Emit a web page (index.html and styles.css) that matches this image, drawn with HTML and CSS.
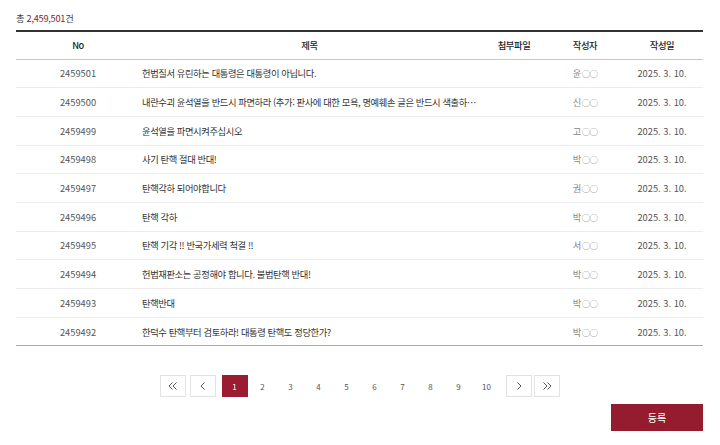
FILE: index.html
```html
<!DOCTYPE html>
<html lang="ko">
<head>
<meta charset="utf-8">
<link rel="stylesheet" href="styles.css">
</head>
<body>
<div class="page">
  <p class="total">총 <span class="count">2,459,501</span>건</p>
  <table class="board">
    <colgroup>
      <col class="c-no"><col class="c-title"><col class="c-file"><col class="c-author"><col class="c-date">
    </colgroup>
    <thead>
      <tr><th>No</th><th>제목</th><th>첨부파일</th><th>작성자</th><th>작성일</th></tr>
    </thead>
    <tbody>
      <tr><td class="no">2459501</td><td class="title">헌법질서 유린하는 대통령은 대통령이 아닙니다.</td><td></td><td class="author">윤<span class="mask">○○</span></td><td class="date">2025. 3. 10.</td></tr>
      <tr><td class="no">2459500</td><td class="title">내란수괴 윤석열을 반드시 파면하라 (추가: 판사에 대한 모욕, 명예훼손 글은 반드시 색출하…</td><td></td><td class="author">신<span class="mask">○○</span></td><td class="date">2025. 3. 10.</td></tr>
      <tr><td class="no">2459499</td><td class="title">윤석열을 파면시켜주십시오</td><td></td><td class="author">고<span class="mask">○○</span></td><td class="date">2025. 3. 10.</td></tr>
      <tr><td class="no">2459498</td><td class="title">사기 탄핵 절대 반대!</td><td></td><td class="author">박<span class="mask">○○</span></td><td class="date">2025. 3. 10.</td></tr>
      <tr><td class="no">2459497</td><td class="title">탄핵각하 되어야합니다</td><td></td><td class="author">권<span class="mask">○○</span></td><td class="date">2025. 3. 10.</td></tr>
      <tr><td class="no">2459496</td><td class="title">탄핵 각하</td><td></td><td class="author">박<span class="mask">○○</span></td><td class="date">2025. 3. 10.</td></tr>
      <tr><td class="no">2459495</td><td class="title">탄핵 기각 !! 반국가세력 척결 !!</td><td></td><td class="author">서<span class="mask">○○</span></td><td class="date">2025. 3. 10.</td></tr>
      <tr><td class="no">2459494</td><td class="title">헌법재판소는 공정해야 합니다. 불법탄핵 반대!</td><td></td><td class="author">박<span class="mask">○○</span></td><td class="date">2025. 3. 10.</td></tr>
      <tr><td class="no">2459493</td><td class="title">탄핵반대</td><td></td><td class="author">박<span class="mask">○○</span></td><td class="date">2025. 3. 10.</td></tr>
      <tr><td class="no">2459492</td><td class="title">한덕수 탄핵부터 검토하라! 대통령 탄핵도 정당한가?</td><td></td><td class="author">박<span class="mask">○○</span></td><td class="date">2025. 3. 10.</td></tr>
    </tbody>
  </table>
  <nav class="pager">
    <a class="nav first" href="#" aria-label="처음"><svg width="10" height="8" viewBox="0 0 10 8"><path d="M4.5 0.5 L1 4 L4.5 7.5 M8.5 0.5 L5 4 L8.5 7.5" fill="none" stroke="#555" stroke-width="1"/></svg></a>
    <a class="nav prev" href="#" aria-label="이전"><svg width="6" height="8" viewBox="0 0 6 8"><path d="M4.5 0.5 L1 4 L4.5 7.5" fill="none" stroke="#555" stroke-width="1"/></svg></a>
    <a class="num active" href="#">1</a>
    <a class="num" href="#">2</a>
    <a class="num" href="#">3</a>
    <a class="num" href="#">4</a>
    <a class="num" href="#">5</a>
    <a class="num" href="#">6</a>
    <a class="num" href="#">7</a>
    <a class="num" href="#">8</a>
    <a class="num" href="#">9</a>
    <a class="num" href="#">10</a>
    <a class="nav next" href="#" aria-label="다음"><svg width="6" height="8" viewBox="0 0 6 8"><path d="M1.5 0.5 L5 4 L1.5 7.5" fill="none" stroke="#555" stroke-width="1"/></svg></a>
    <a class="nav last" href="#" aria-label="마지막"><svg width="10" height="8" viewBox="0 0 10 8"><path d="M1.5 0.5 L5 4 L1.5 7.5 M5.5 0.5 L9 4 L5.5 7.5" fill="none" stroke="#555" stroke-width="1"/></svg></a>
  </nav>
  <div class="actions">
    <button class="btn-write" type="button">등록</button>
  </div>
</div>
</body>
</html>
```
FILE: styles.css
```css
* { box-sizing: border-box; }
html, body { margin: 0; background: #fff; }
body {
  font-family: "Noto Sans CJK KR", "Noto Sans", sans-serif;
  font-size: 9.3px;
  color: #333;
}
.page { padding: 0 17px 0 16px; }
.total {
  margin: 0;
  padding-top: 11px;
  height: 30px;
  line-height: 14px;
  color: #444;
  letter-spacing: -0.3px;
}
.count { color: #8c2235; }
.board {
  width: 100%;
  border-collapse: collapse;
  table-layout: fixed;
  border-top: 2px solid #333;
  border-bottom: 1px solid #aaa;
}
.c-no { width: 124px; }
.c-file { width: 70px; }
.c-author { width: 72px; }
.c-date { width: 82px; }
.board th {
  height: 28px;
  font-weight: 500;
  color: #222;
  border-bottom: 1px solid #c8c8c8;
  letter-spacing: -0.4px;
}
.board td {
  height: 28.7px;
  border-bottom: 1px solid #ececec;
  text-align: center;
  color: #555;
  padding: 0;
  white-space: nowrap;
  overflow: hidden;
}
.board tbody tr:last-child td { border-bottom: 0; }
.board td.title {
  text-align: left;
  padding-left: 2px;
  color: #333;
  letter-spacing: -0.4px;
}
.board td.author { color: #888; }
.mask {
  font-size: 8.5px;
  letter-spacing: -0.8px;
  margin-left: 0.5px;
}
.pager {
  display: flex;
  justify-content: center;
  margin-top: 29px;
  height: 22px;
}
.pager a {
  width: 26px;
  height: 22px;
  display: flex;
  align-items: center;
  justify-content: center;
  text-decoration: none;
  color: #555;
  font-size: 8px;
}
.pager .nav { border: 1px solid #e2e2e2; }
.pager .prev { margin-left: 4px; margin-right: 5px; }
.pager .num { margin: 0 1px; }
.pager .next { margin-left: 5px; margin-right: 2px; }
.pager .active { background: #9b1b30; color: #fff; }
.actions {
  display: flex;
  justify-content: flex-end;
  margin-top: 7px;
}
.btn-write {
  width: 92px;
  height: 27px;
  border: 0;
  background: #951c2e;
  color: #fff;
  font-family: inherit;
  font-size: 10px;
}
```
